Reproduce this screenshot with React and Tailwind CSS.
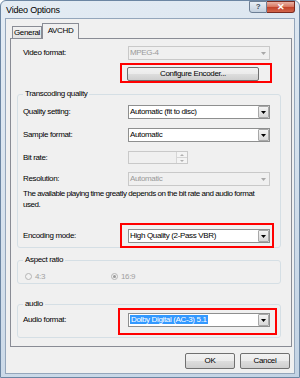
import React from 'react';

function Arrow({ disabled }) {
  return (
    <svg width="5" height="3" viewBox="0 0 5 3">
      <path d="M0 0h5L2.5 3z" fill={disabled ? '#a8a8a8' : '#000'} />
    </svg>
  );
}

function Combo({ value, disabled, selected }) {
  return (
    <div
      className={
        disabled
          ? 'flex items-center w-[142px] h-[14px] border border-[#c9c9c9] bg-[#f0f0f0] text-[#9a9a9a]'
          : 'flex items-center w-[142px] h-[14px] border border-[#8e8f8f] bg-white text-black'
      }
    >
      <span className="pl-[1px] leading-[10px] whitespace-nowrap">
        {selected ? (
          <span className="bg-[#3399ff] text-white px-[1px]">{value}</span>
        ) : (
          value
        )}
      </span>
      {disabled ? (
        <div className="ml-auto w-[12px] h-full flex items-center justify-center">
          <Arrow disabled />
        </div>
      ) : (
        <div className="ml-auto w-[11px] h-[12px] flex items-center justify-center border border-[#a8a8a8] rounded-[1px] bg-gradient-to-b from-[#f4f4f4] to-[#d8d8d8]">
          <Arrow />
        </div>
      )}
    </div>
  );
}

function Button({ children, className }) {
  return (
    <div
      className={
        'flex items-center justify-center h-[14px] border border-[#707070] rounded-[2px] bg-[linear-gradient(#f2f2f2_0%,#ebebeb_50%,#dddddd_51%,#cfcfcf_100%)] text-black leading-[10px] ' +
        className
      }
    >
      {children}
    </div>
  );
}

function Row({ label, children, className }) {
  return (
    <div className={'flex items-center ' + (className || '')}>
      <div className="w-[110px] pl-[5px] leading-[10px] whitespace-nowrap">{label}</div>
      {children}
    </div>
  );
}

function Radio({ checked }) {
  return (
    <span className="w-[7px] h-[7px] rounded-full border border-[#b5b5b5] bg-[#f2f2f2] flex items-center justify-center">
      {checked && <span className="w-[3px] h-[3px] rounded-full bg-[#9a9a9a]" />}
    </span>
  );
}

export default function App() {
  return (
    <div className="w-[300px] h-[378px] flex flex-col border border-[#6c86a3] rounded-t-[6px] bg-[linear-gradient(160deg,#e4ecf4_0%,#d4e0ec_55%,#c3d3e4_100%)] font-['Liberation_Sans',Arial,sans-serif] text-[8px] tracking-[-0.35px] text-black">
      <div className="h-[17px] flex">
        <div className="pl-[5px] pt-[4px] text-[9px] tracking-[-0.2px] leading-[10px]">Video Options</div>
        <div className="ml-auto mr-[4px] flex h-[12px]">
          <div className="w-[18px] h-full border border-[#6d7f95] rounded-bl-[3px] bg-gradient-to-b from-[#e9eff6] to-[#c3d0de] flex items-center justify-center text-[8px] font-bold text-[#3d4a5c] leading-none">
            ?
          </div>
          <div className="w-[28px] h-full border border-l-0 border-[#7b2a1f] rounded-br-[3px] bg-[linear-gradient(#eab3a6_0%,#d97a64_45%,#c3442c_55%,#d1654a_100%)] flex items-center justify-center text-[9px] font-bold text-white leading-none">
            ✕
          </div>
        </div>
      </div>

      <div className="mx-[4px] h-[356px] border border-[#94a6bb] bg-[#f0f0f0] flex flex-col">
        <div className="ml-[4px] pt-[4px] flex flex-col">
          <div className="flex items-end h-[15px] pl-[2px]">
            <div className="w-[30px] h-[12px] border border-b-0 border-[#898c95] bg-gradient-to-b from-[#f2f2f2] to-[#e3e3e3] flex items-center justify-center leading-[10px]">
              General
            </div>
            <div className="relative z-10 -mb-px w-[37px] h-[16px] border border-b-0 border-[#898c95] bg-[#f0f0f0] flex items-start justify-center pt-[2px] leading-[10px]">
              AVCHD
            </div>
          </div>

          <div className="w-[282px] h-[309px] border border-[#898c95] bg-[#f0f0f0] pl-[6px] pt-[7px]">
            <div className="flex items-center h-[14px]">
              <div className="w-[111px] pl-[6px] leading-[10px]">Video format:</div>
              <Combo value="MPEG-4" disabled />
            </div>

            <div className="relative mt-[7px] ml-[110px] w-[132px]">
              <Button className="w-[132px]">Configure Encoder...</Button>
              <span className="absolute z-20 left-[-7px] top-[-4px] w-[152px] h-[20px] border-2 border-[#ff0000]" />
            </div>

            <fieldset className="mt-[8px] w-[264px] border border-[#d5dfe5] rounded-[3px] pb-[4px]">
              <legend className="ml-[5px] px-[2px] leading-[10px]">Transcoding quality</legend>
              <Row label="Quality setting:" className="mt-[6px]">
                <Combo value="Automatic (fit to disc)" />
              </Row>
              <Row label="Sample format:" className="mt-[9px]">
                <Combo value="Automatic" />
              </Row>
              <Row label="Bit rate:" className="mt-[9px]">
                <div className="flex w-[60px] h-[13px] border border-[#c9c9c9] bg-[#f0f0f0]">
                  <div className="ml-auto w-[11px] h-full flex flex-col border-l border-[#d6d6d6]">
                    <div className="flex-1 flex items-center justify-center border-b border-[#d6d6d6] bg-[#f4f4f4]">
                      <svg width="4" height="2" viewBox="0 0 4 2"><path d="M0 2h4L2 0z" fill="#b0b0b0" /></svg>
                    </div>
                    <div className="flex-1 flex items-center justify-center bg-[#f4f4f4]">
                      <svg width="4" height="2" viewBox="0 0 4 2"><path d="M0 0h4L2 2z" fill="#b0b0b0" /></svg>
                    </div>
                  </div>
                </div>
              </Row>
              <Row label="Resolution:" className="mt-[8px]">
                <Combo value="Automatic" disabled />
              </Row>
              <div className="mt-[2px] pl-[5px] leading-[11px] whitespace-nowrap tracking-[-0.45px]">
                The available playing time greatly depends on the bit rate and audio format
                <br />
                used.
              </div>
              <Row label="Encoding mode:" className="mt-[19px]">
                <div className="relative">
                  <Combo value="High Quality (2-Pass VBR)" />
                  <span className="absolute z-20 left-[-8px] top-[-6px] w-[154px] h-[25px] border-2 border-[#ff0000]" />
                </div>
              </Row>
            </fieldset>

            <fieldset className="mt-[7px] w-[264px] border border-[#d5dfe5] rounded-[3px] pb-[1px]">
              <legend className="ml-[5px] px-[2px] leading-[10px]">Aspect ratio</legend>
              <div className="mt-[6px] h-[11px] flex items-center pl-[7px] text-[#a0a0a0]">
                <div className="w-[86px] flex items-center gap-[3px]">
                  <Radio />
                  <span className="leading-[10px]">4:3</span>
                </div>
                <div className="flex items-center gap-[3px]">
                  <Radio checked />
                  <span className="leading-[10px]">16:9</span>
                </div>
              </div>
            </fieldset>

            <fieldset className="mt-[15px] w-[264px] border border-[#d5dfe5] rounded-[3px] pb-[10px]">
              <legend className="ml-[5px] px-[2px] leading-[10px]">audio</legend>
              <Row label="Audio format:" className="mt-[4px]">
                <div className="relative">
                  <Combo value="Dolby Digital (AC-3) 5.1" selected />
                  <span className="absolute z-20 left-[-10px] top-[-5px] w-[159px] h-[27px] border-2 border-[#ff0000]" />
                </div>
              </Row>
            </fieldset>
          </div>
        </div>

        <div className="mt-[6px] flex justify-end gap-[5px] pr-[4px]">
          <Button className="w-[50px] h-[16px]">OK</Button>
          <Button className="w-[50px] h-[16px]">Cancel</Button>
        </div>
      </div>
    </div>
  );
}
